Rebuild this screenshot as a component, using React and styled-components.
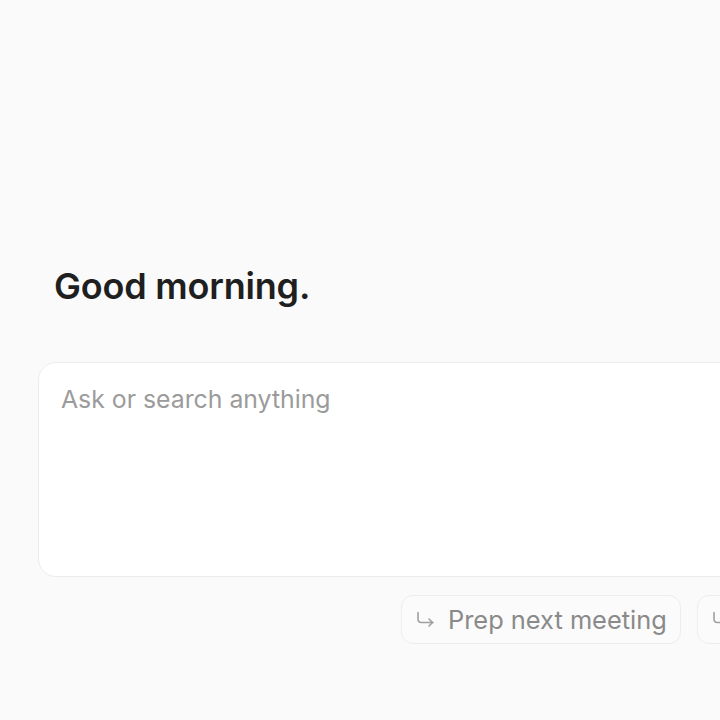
import React from "react";
import styled, { createGlobalStyle } from "styled-components";

const Global = createGlobalStyle`
  html, body { margin: 0; padding: 0; background: #fafafa; overflow: hidden; }
  body { font-family: Inter, "Noto Sans", sans-serif; }
`;

const Page = styled.div`
  width: 720px;
  height: 720px;
  overflow: hidden;
  display: flex;
  flex-direction: column;
  padding: 264px 0 0 38px;
  box-sizing: border-box;
`;

const Greeting = styled.h1`
  margin: 0 0 0 16px;
  font-size: 36px;
  font-weight: 600;
  color: #1f1f1f;
  letter-spacing: -0.2px;
  line-height: 44px;
`;

const Card = styled.div`
  margin-top: 54px;
  width: 760px;
  height: 215px;
  box-sizing: border-box;
  background: #ffffff;
  border: 1px solid #ececec;
  border-radius: 18px;
  padding: 20px 22px;
`;

const Placeholder = styled.div`
  font-size: 24.8px;
  color: #9b9b9b;
  line-height: 32px;
`;

const Chips = styled.div`
  display: flex;
  gap: 16px;
  margin-top: 18px;
  padding-left: 363px;
`;

const Chip = styled.div`
  flex: none;
  display: flex;
  align-items: center;
  gap: 13px;
  height: 49px;
  box-sizing: border-box;
  padding: 0 13px;
  border: 1px solid #ededed;
  border-radius: 12px;
  background: #fbfbfb;
  color: #8a8a8a;
  font-size: 25.4px;
  white-space: nowrap;
`;

const Arrow = () => (
  <svg width="20" height="20" viewBox="0 0 20 20" fill="none" stroke="#a0a0a0" strokeWidth="1.6" strokeLinecap="round" strokeLinejoin="round">
    <path d="M3 2.5v7a3 3 0 0 0 3 3h12" />
    <path d="M14 9l3.5 3.5L14 16" />
  </svg>
);

export default function App() {
  return (
    <>
      <Global />
      <Page>
        <Greeting>Good morning.</Greeting>
        <Card>
          <Placeholder>Ask or search anything</Placeholder>
        </Card>
        <Chips>
          <Chip><Arrow />Prep next meeting</Chip>
          <Chip><Arrow />Summarize my week</Chip>
        </Chips>
      </Page>
    </>
  );
}
